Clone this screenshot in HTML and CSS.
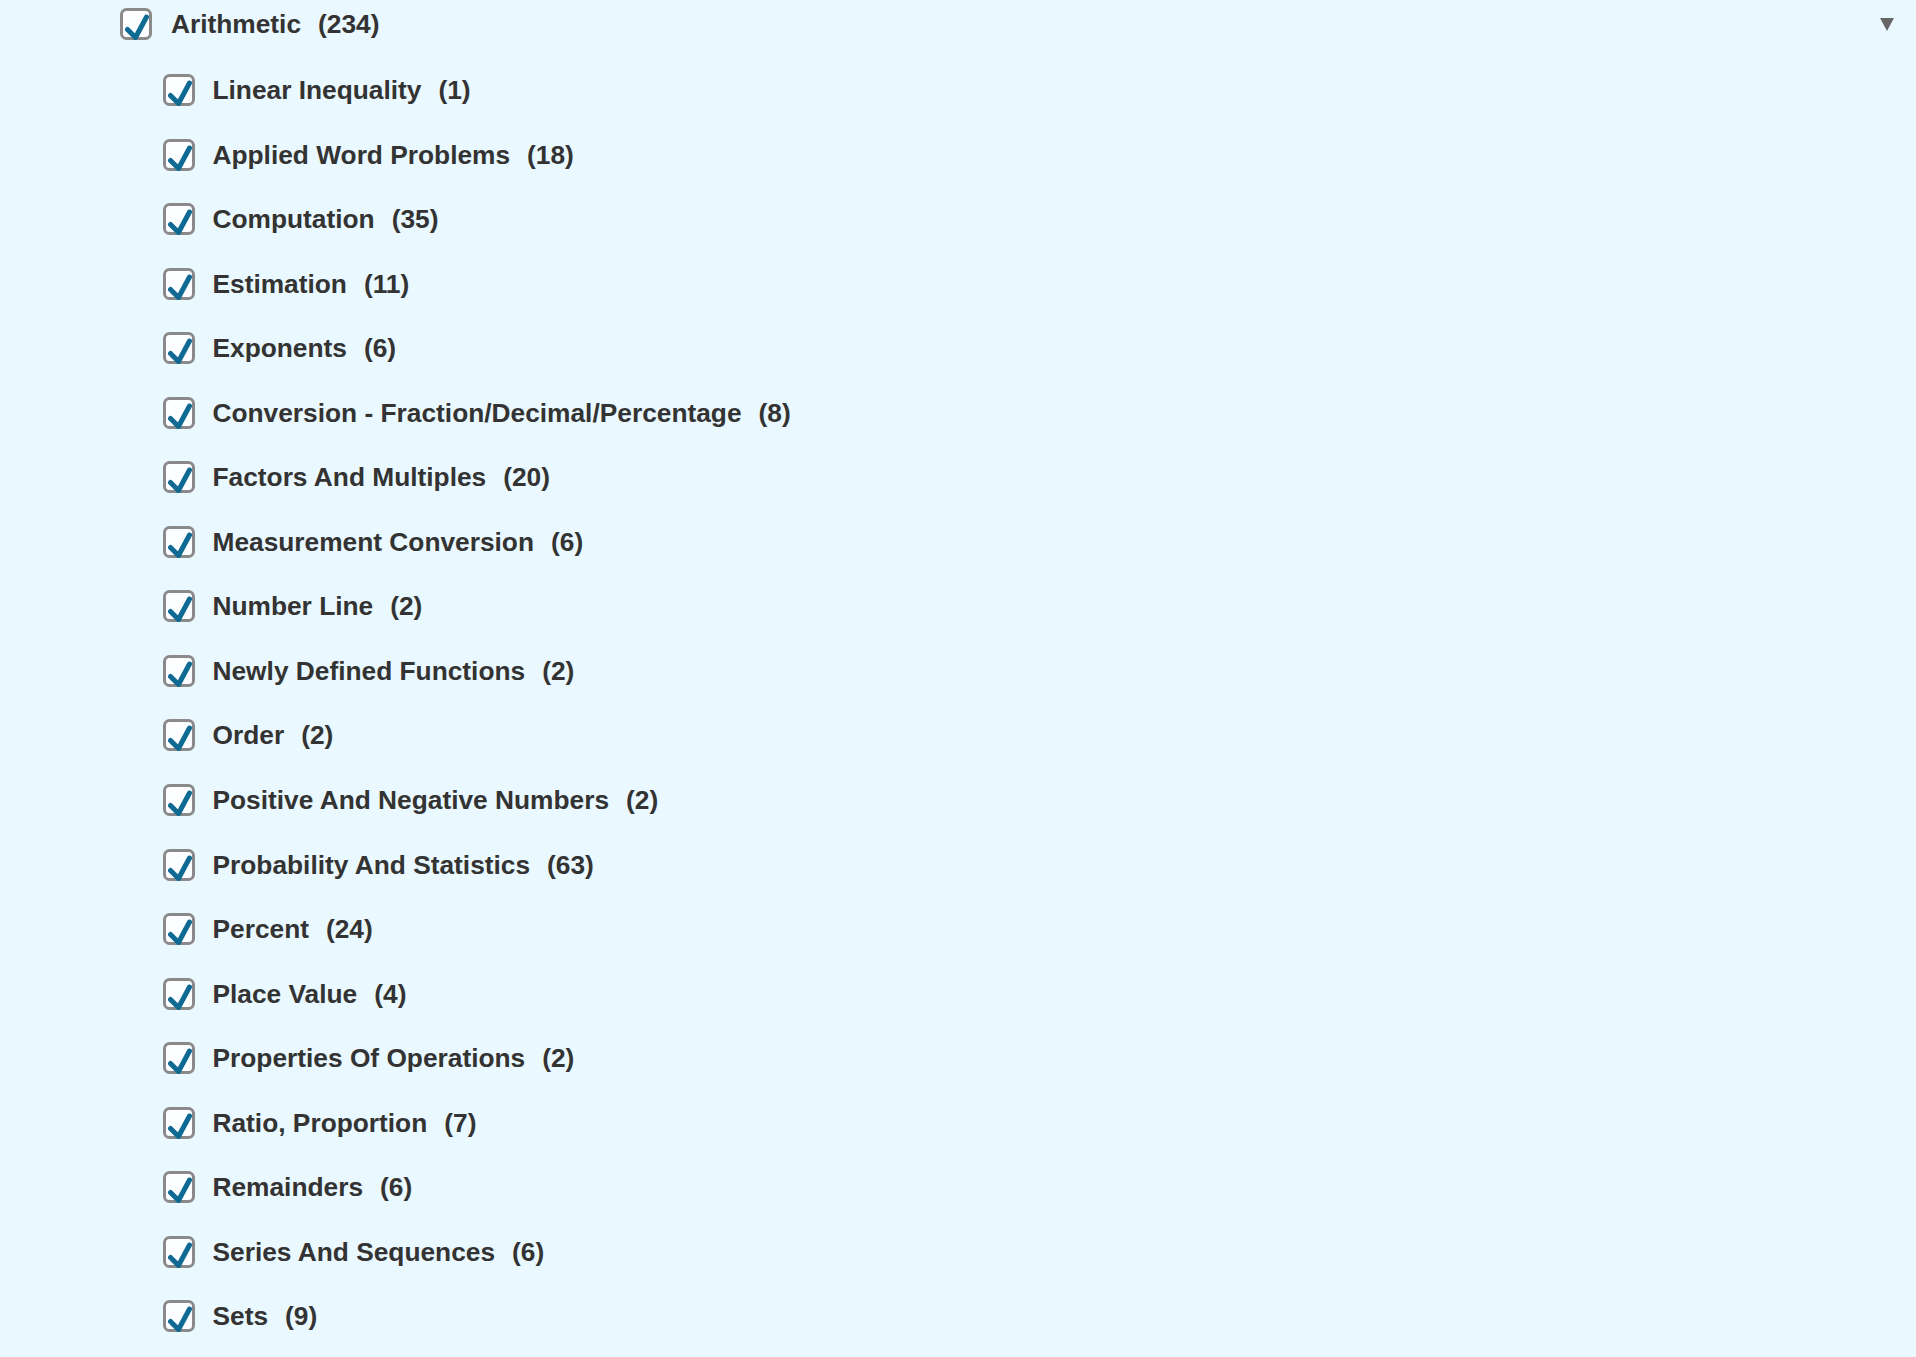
FILE: index.html
```html
<!DOCTYPE html>
<html lang="en">
<head>
    <meta charset="utf-8">
    <title>Topics - Arithmetic</title>
    <link rel="stylesheet" href="styles.css">
</head>
<body>
    <svg class="defs" width="0" height="0">
        <symbol id="chk" viewBox="0 0 32 32">
            <rect x="1.5" y="1.5" width="29" height="29" rx="5" ry="5" fill="#fcfeff" stroke="#8a8a8a" stroke-width="3"/>
            <polyline points="7.5,21.5 15.5,29.5 26.5,9" fill="none" stroke="#0f6a93" stroke-width="5" stroke-linecap="round" stroke-linejoin="round"/>
        </symbol>
    </svg>

    <div class="topic">
        <div class="topic-head">
            <svg class="check"><use href="#chk"/></svg>
            <span class="label">Arithmetic<span class="count">(234)</span></span>
            <span class="caret"></span>
        </div>
        <ul class="subtopics">
            <li><svg class="check"><use href="#chk"/></svg><span class="label">Linear Inequality<span class="count">(1)</span></span></li>
            <li><svg class="check"><use href="#chk"/></svg><span class="label">Applied Word Problems<span class="count">(18)</span></span></li>
            <li><svg class="check"><use href="#chk"/></svg><span class="label">Computation<span class="count">(35)</span></span></li>
            <li><svg class="check"><use href="#chk"/></svg><span class="label">Estimation<span class="count">(11)</span></span></li>
            <li><svg class="check"><use href="#chk"/></svg><span class="label">Exponents<span class="count">(6)</span></span></li>
            <li><svg class="check"><use href="#chk"/></svg><span class="label">Conversion - Fraction/Decimal/Percentage<span class="count">(8)</span></span></li>
            <li><svg class="check"><use href="#chk"/></svg><span class="label">Factors And Multiples<span class="count">(20)</span></span></li>
            <li><svg class="check"><use href="#chk"/></svg><span class="label">Measurement Conversion<span class="count">(6)</span></span></li>
            <li><svg class="check"><use href="#chk"/></svg><span class="label">Number Line<span class="count">(2)</span></span></li>
            <li><svg class="check"><use href="#chk"/></svg><span class="label">Newly Defined Functions<span class="count">(2)</span></span></li>
            <li><svg class="check"><use href="#chk"/></svg><span class="label">Order<span class="count">(2)</span></span></li>
            <li><svg class="check"><use href="#chk"/></svg><span class="label">Positive And Negative Numbers<span class="count">(2)</span></span></li>
            <li><svg class="check"><use href="#chk"/></svg><span class="label">Probability And Statistics<span class="count">(63)</span></span></li>
            <li><svg class="check"><use href="#chk"/></svg><span class="label">Percent<span class="count">(24)</span></span></li>
            <li><svg class="check"><use href="#chk"/></svg><span class="label">Place Value<span class="count">(4)</span></span></li>
            <li><svg class="check"><use href="#chk"/></svg><span class="label">Properties Of Operations<span class="count">(2)</span></span></li>
            <li><svg class="check"><use href="#chk"/></svg><span class="label">Ratio, Proportion<span class="count">(7)</span></span></li>
            <li><svg class="check"><use href="#chk"/></svg><span class="label">Remainders<span class="count">(6)</span></span></li>
            <li><svg class="check"><use href="#chk"/></svg><span class="label">Series And Sequences<span class="count">(6)</span></span></li>
            <li><svg class="check"><use href="#chk"/></svg><span class="label">Sets<span class="count">(9)</span></span></li>
        </ul>
    </div>
</body>
</html>
```

FILE: styles.css
```css
html, body {
    margin: 0;
    background-color: #eaf8ff;
}
body {
    color: #333333;
    font-family: "Liberation Sans", Arial, sans-serif;
    font-weight: bold;
    font-size: 26.3px;
    height: 1357px;
    overflow: hidden;
}
.defs {
    position: absolute;
    width: 0;
    height: 0;
}
.topic {
    padding-left: 120px;
}
.topic-head {
    display: flex;
    align-items: center;
    height: 48px;
    padding-right: 22px;
}
.check {
    width: 32px;
    height: 32px;
    flex: none;
    margin-right: 19px;
}
.label {
    white-space: nowrap;
    line-height: 30px;
}
.count {
    margin-left: 17px;
}
.caret {
    margin-left: auto;
    width: 0;
    height: 0;
    border-left: 7.5px solid transparent;
    border-right: 7.5px solid transparent;
    border-top: 13px solid #666666;
}
.subtopics {
    list-style: none;
    margin: 9.7px 0 0 43px;
    padding: 0;
}
.subtopics li {
    display: flex;
    align-items: center;
    height: 64.56px;
}
.subtopics .check {
    margin-right: 17.5px;
}
```
